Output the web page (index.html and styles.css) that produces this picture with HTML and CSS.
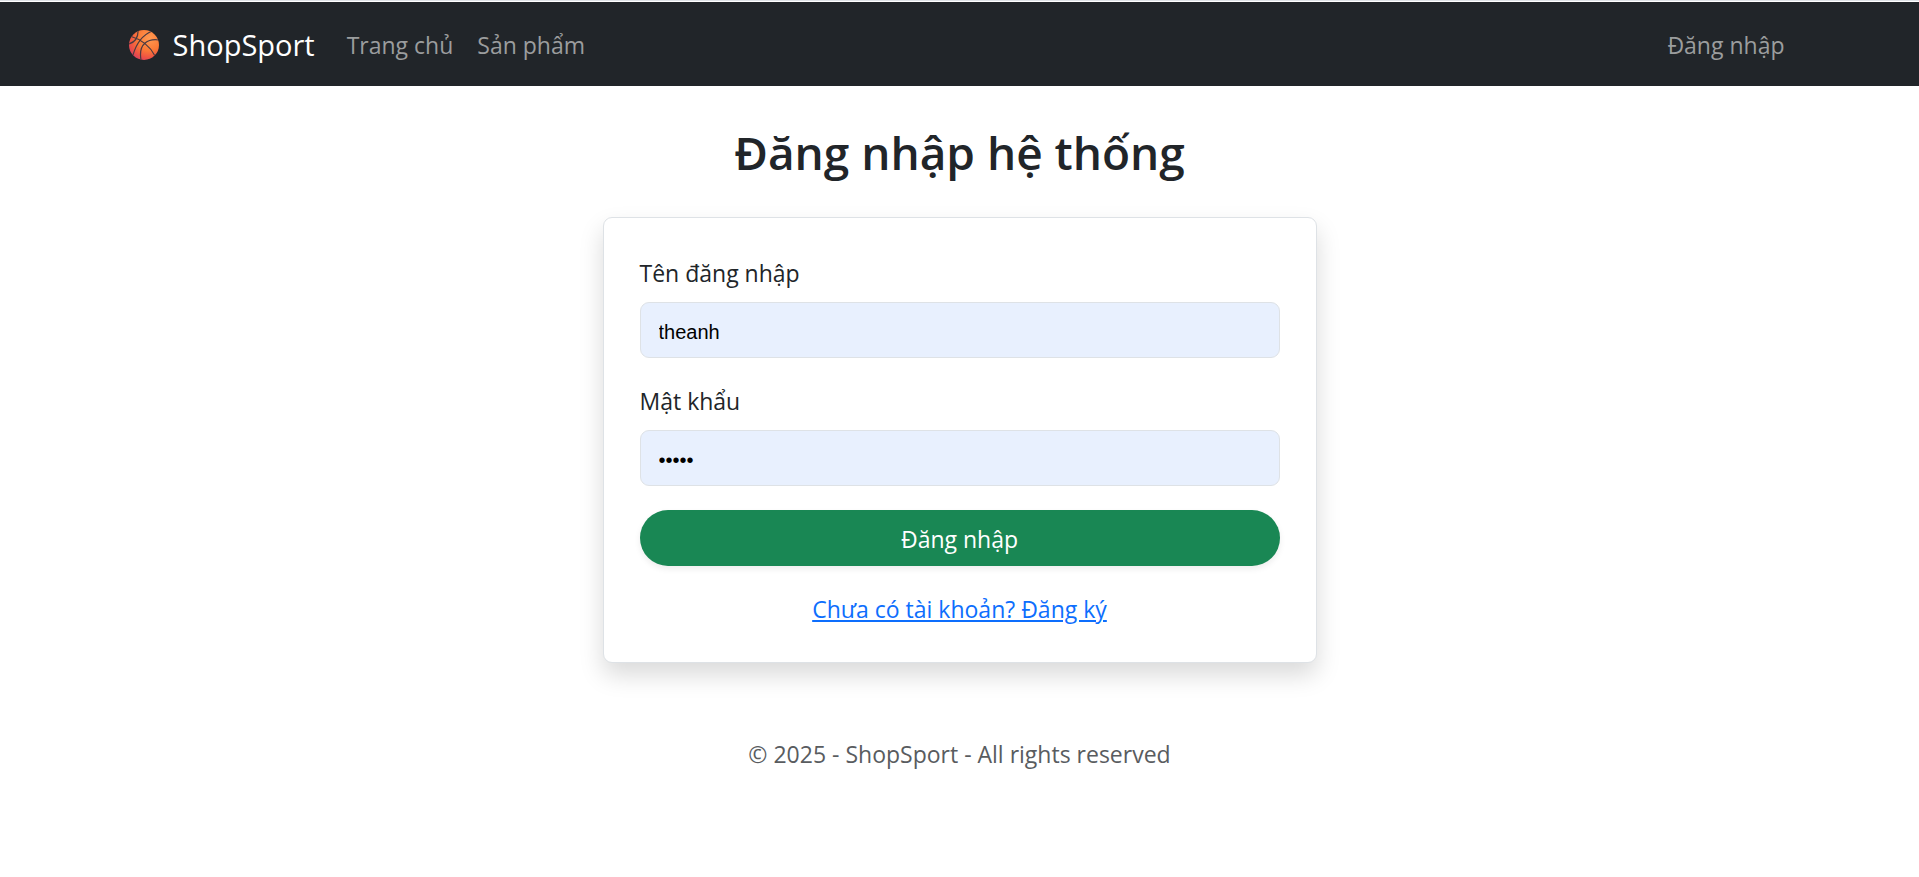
FILE: index.html
```html
<!DOCTYPE html>
<html lang="vi">
<head>
<meta charset="utf-8">
<meta name="viewport" content="width=device-width, initial-scale=1">
<title>Đăng nhập - ShopSport</title>
<link rel="stylesheet" href="styles.css">
</head>
<body>
<nav class="navbar">
  <div class="container navbar-inner">
    <a class="brand" href="#">
      <svg class="brand-icon" viewBox="0 0 30 30" aria-hidden="true">
        <defs>
          <radialGradient id="ball" cx="0.68" cy="0.28" r="0.8">
            <stop offset="0" stop-color="#ff9a52"/>
            <stop offset="0.5" stop-color="#fb7a36"/>
            <stop offset="0.8" stop-color="#ee5344"/>
            <stop offset="1" stop-color="#d8405f"/>
          </radialGradient>
          <clipPath id="disc"><circle cx="15" cy="15" r="15"/></clipPath>
        </defs>
        <circle cx="15" cy="15" r="15" fill="url(#ball)"/>
        <g clip-path="url(#disc)" fill="none" stroke="#4a3a42" stroke-width="1.2">
          <path d="M1 6C11 9 21 16 26 26"/>
          <path d="M9 0C9.500 8 6 12 0 14"/>
          <path d="M23 1C16 4 8 11 4 25"/>
          <path d="M30 10C20 8.500 9 13 12 30"/>
        </g>
      </svg>
      <span>ShopSport</span>
    </a>
    <div class="nav-links">
      <a class="nav-link" href="#">Trang chủ</a>
      <a class="nav-link" href="#">Sản phẩm</a>
    </div>
    <a class="nav-link nav-end" href="#">Đăng nhập</a>
  </div>
</nav>
<main class="container main">
  <h2 class="title">Đăng nhập hệ thống</h2>
  <form class="card">
    <div class="field">
      <label class="label" for="username">Tên đăng nhập</label>
      <input class="input" id="username" type="text" value="theanh">
    </div>
    <div class="field">
      <label class="label" for="password">Mật khẩu</label>
      <input class="input" id="password" type="password" value="12345">
    </div>
    <button class="submit" type="submit">Đăng nhập</button>
    <div class="register"><a class="register-link" href="#">Chưa có tài khoản? Đăng ký</a></div>
  </form>
</main>
<footer class="footer">© 2025 - ShopSport - All rights reserved</footer>
</body>
</html>
```

FILE: styles.css
```css
* {
  box-sizing: border-box;
}

body {
  margin: 0;
  border-top: 1px solid #dee2e6;
  padding-top: 1px;
  background: #fff;
  color: #212529;
  font-family: "Open Sans", "Noto Sans", sans-serif;
  font-size: 23px;
  line-height: 38px;
}

.container {
  width: 100%;
  max-width: 1710px;
  margin: 0 auto;
  padding: 0 18px;
}

.navbar {
  padding: 12px 0;
  background: #212529;
}

.navbar-inner {
  display: flex;
  align-items: center;
}

.brand {
  display: flex;
  align-items: center;
  margin-right: 20px;
  padding-top: 2px;
  color: #fff;
  font-size: 29px;
  text-decoration: none;
}

.brand-icon {
  width: 30px;
  height: 30px;
  margin: 0 14px 0 6px;
}

.nav-links {
  display: flex;
}

.nav-link {
  padding: 12px 12px 10px;
  color: #9b9d9e;
  text-decoration: none;
}

.nav-end {
  margin-left: auto;
}

.main {
  padding-top: 36px;
}

.title {
  margin: 0 0 35px;
  font-size: 46px;
  font-weight: 600;
  line-height: 60px;
  text-align: center;
}

.card {
  max-width: 714px;
  margin: 0 auto;
  padding: 36px 36px 34px;
  border: 1px solid #dee2e6;
  border-radius: 9px;
  background: #fff;
  box-shadow: 0 12px 24px rgba(0, 0, 0, 0.15);
}

.field {
  margin-bottom: 24px;
}

.label {
  display: block;
  margin-bottom: 10px;
}

.input {
  display: block;
  width: 100%;
  height: 56px;
  padding: 4px 18px 0;
  border: 1px solid #dee2e6;
  border-radius: 9px;
  background: #e8f0fe;
  color: #000;
  font-family: "Liberation Sans", Arial, sans-serif;
  font-size: 20px;
}

.submit {
  display: block;
  width: 100%;
  height: 56px;
  padding: 2px 18px 0;
  border: 0;
  border-radius: 28px;
  background: #198754;
  box-shadow: 0 3px 6px rgba(0, 0, 0, 0.075);
  color: #fff;
  font: inherit;
}

.register {
  margin-top: 24px;
  text-align: center;
}

.register-link {
  color: #0d6efd;
}

.footer {
  padding: 72px 18px 24px;
  color: #595c5f;
  text-align: center;
}
```
